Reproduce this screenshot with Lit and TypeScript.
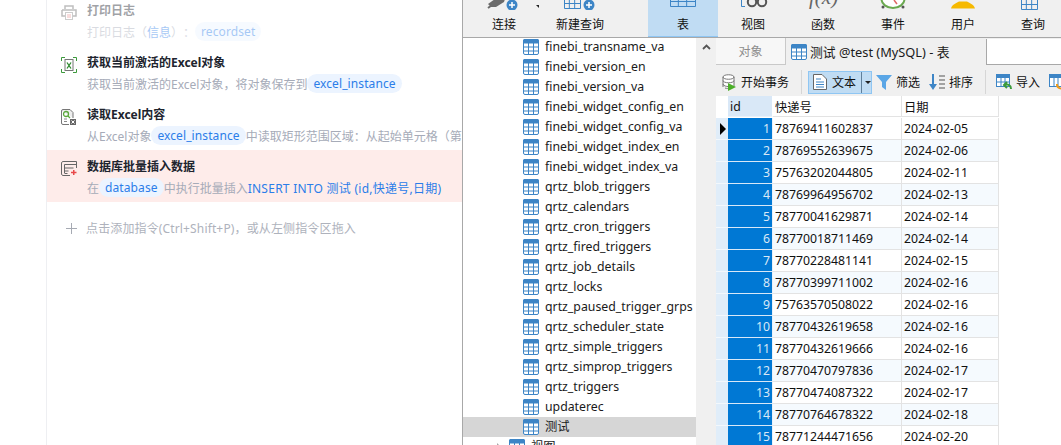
import { LitElement, html, css, svg } from "lit";
import { customElement } from "lit/decorators.js";

const tableNames = [
  "finebi_transname_va","finebi_version_en","finebi_version_va","finebi_widget_config_en","finebi_widget_config_va",
  "finebi_widget_index_en","finebi_widget_index_va","qrtz_blob_triggers","qrtz_calendars","qrtz_cron_triggers",
  "qrtz_fired_triggers","qrtz_job_details","qrtz_locks","qrtz_paused_trigger_grps","qrtz_scheduler_state",
  "qrtz_simple_triggers","qrtz_simprop_triggers","qrtz_triggers","updaterec","测试",
];
const rows: [string, string][] = [
  ["78769411602837","2024-02-05"],["78769552639675","2024-02-06"],["75763202044805","2024-02-11"],
  ["78769964956702","2024-02-13"],["78770041629871","2024-02-14"],["78770018711469","2024-02-14"],
  ["78770228481141","2024-02-15"],["78770399711002","2024-02-16"],["75763570508022","2024-02-16"],
  ["78770432619658","2024-02-16"],["78770432619666","2024-02-16"],["78770470797836","2024-02-17"],
  ["78770474087322","2024-02-17"],["78770764678322","2024-02-18"],["78771244471656","2024-02-20"],
];

const gridIcon = html`<svg class="ti" width="16" height="16" viewBox="0 0 16 16">
  <rect x=".5" y=".5" width="15" height="15" rx="1.5" fill="#fff" stroke="#3d85c6"/>
  <rect x="0" y="0" width="16" height="4.5" rx="1.5" fill="#3d85c6"/>
  <path d="M0 8h16M0 12h16M5.5 4v12M10.500 4v12" stroke="#3d85c6" stroke-width="1"/>
</svg>`;

const plus = (cx: number, cy: number) => svg`<circle cx=${cx} cy=${cy} r="5.500" fill="#3d85c6"/><path d="M${cx - 3} ${cy}h6M${cx} ${cy - 3}v6" stroke="#fff" stroke-width="1.500"/>`;
const gridBottom = (x: number, w: number, bottom: number) => {
  const c = (w - 1) / 3;
  return svg`<path d="M${x + .5} 0V${bottom - .5}H${x + w - .5}V0M${x} ${bottom - 5.500}H${x + w}M${x + c} 0V${bottom}M${x + 2 * c} 0V${bottom}" fill="none" stroke="#3d85c6"/>`;
};

const topIcons = {
  conn: svg`<path d="M19 4L26 -1H36L35 2L27 7H22Z" fill="#6b6b6b"/><path d="M19 8L23 5" stroke="#6b6b6b" stroke-width="2"/>${plus(43, 5)}<path d="M67 5h6l-3 3z" fill="#222"/>`,
  query: svg`${gridBottom(19, 17, 9)}${plus(44, 5)}`,
  table: svg`${gridBottom(22, 26, 7)}`,
  view: svg`<path d="M23.500 0V6.500H27" fill="none" stroke="#3d85c6"/><circle cx="34" cy="2" r="4.200" fill="none" stroke="#555" stroke-width="2"/><circle cx="44" cy="2" r="4.200" fill="none" stroke="#555" stroke-width="2"/>`,
  func: svg`<text x="21" y="4" class="fx">f(x)</text>`,
  event: svg`<path d="M23.500 -1A11.500 9 0 0 0 46.500 -1" fill="#fff" stroke="#6aa84f" stroke-width="2"/><path d="M36 0L39 4" stroke="#e06666" stroke-width="1.500"/><circle cx="25" cy="7" r="1.500" fill="#555"/><circle cx="45" cy="7" r="1.500" fill="#555"/>`,
  user: svg`<path d="M23 8.500C24 4 29 3 31 1.500H39C41 3 46 4 47 8.500Z" fill="#f6b900"/>`,
  find: svg`${gridBottom(23, 17, 10)}`,
};

@customElement("tb-item")
class TbItem extends LitElement {
  static properties = { label: {}, active: { type: Boolean, reflect: true } };
  label = "";
  active = false;
  static styles = css`
    :host { display: flex; flex-direction: column; align-items: center; width: 70px; height: 37px; box-sizing: border-box; }
    :host([active]) { background: #c0dcf3; border-bottom: 1px solid #8fc6f3; }
    svg { display: block; width: 70px; height: 10px; flex: none; }
    .fx { font: italic 21px "Liberation Serif", serif; fill: #666; }
    span { margin-top: 7px; font-size: 12px; line-height: 16px; color: #111; white-space: nowrap; }
  `;
  render() {
    return html`<svg viewBox="0 0 70 10">${(topIcons as any)[this.getAttribute("icon") || "table"]}</svg><span>${this.label}</span>`;
  }
}

@customElement("app-root")
export class AppRoot extends LitElement {
  static styles = css`
    :host { display: grid; grid-template-columns: 463px 1fr; width: 1061px; height: 445px; overflow: hidden; background: #fff;
      font-family: "Noto Sans", "Noto Sans CJK SC", sans-serif; text-spacing-trim: space-all; }

    .flow { border-right: 1px solid #a8a8a8; overflow: hidden; height: 445px; box-sizing: border-box; padding-left: 46px; }
    .flowin { border-left: 1px solid #eeeff2; height: 451px; margin-top: -6px; }
    .step { display: grid; grid-template-columns: 40px 1fr; height: 52px; align-items: start; padding-top: 8px; box-sizing: border-box; }
    .step.faded { opacity: .42; }
    .step.err { background: #feecea; }
    .step svg { margin: 3px 0 0 14px; display: block; }
    .txt { min-width: 0; }
    .tt { font-size: 12px; line-height: 17px; font-weight: 700; color: #20242e; white-space: nowrap; }
    .ds { display: flex; align-items: center; height: 19px; margin-top: 3px; font-size: 12px; color: #a6abb8; white-space: nowrap; overflow: hidden; }
    .chip { background: #ecf4ff; color: #2b7de9; border-radius: 10px; padding: 0 6px; line-height: 19px; letter-spacing: .1px; flex: none; }
    .blue { color: #2b7de9; }
    .wide { letter-spacing: .26px; }
    .add { display: flex; align-items: center; margin-top: 18px; height: 16px; padding-left: 19px; font-size: 12px; letter-spacing: .14px; color: #aeb2bc; white-space: nowrap; }
    .add svg { margin-right: 9px; }

    .right { display: flex; flex-direction: column; min-width: 0; height: 445px; }
    .tb { display: flex; height: 37px; flex: none; background: #f0f0f0; padding-left: 6px; box-sizing: content-box; border-bottom: 1px solid #a8a8a8; }
    .tb .q { margin-left: 6px; }
    .tb .sep { width: 1px; height: 35px; background: #dcdcdc; margin: 0 16px 0 17px; }
    .main { display: grid; grid-template-columns: 233px 20px 1fr; flex: 1; min-height: 0; }

    .tree { overflow: hidden; }
    .treein { margin-top: -1px; }
    .node { display: flex; align-items: center; height: 20px; padding-left: 60px; font-size: 12.300px; color: #1a1a1a; white-space: nowrap; }
    .node span.t { margin-bottom: 2px; }
    .node.sel { background: #d6d6d6; }
    .node.folder { padding-left: 46px; }
    .node .ti { margin-right: 6px; flex: none; }
    .arrow { width: 0; height: 0; border-left: 4px solid #a6a6a6; border-top: 4px solid transparent; border-bottom: 4px solid transparent; margin: 0 8px 0 -12px; }

    .sb { background: #f0f0f0; display: flex; justify-content: center; padding-top: 6px; align-items: flex-start; }

    .data { display: flex; flex-direction: column; min-width: 0; background: #f0f0f0; }
    .tabs { display: flex; height: 27px; flex: none; }
    .tab0 { width: 69px; background: #f7f7f7; border-right: 1px solid #c9c9c9; border-bottom: 1px solid #c9c9c9; display: flex; align-items: center; justify-content: center; font-size: 12px; color: #8d8d8d; }
    .tab1 { width: 200px; display: flex; align-items: center; padding-left: 5px; box-sizing: border-box; gap: 3px; font-size: 12.800px; color: #1a1a1a; white-space: nowrap; }
    .tabrest { flex: 1; background: #fff; border-left: 1px solid #a8a8a8; border-bottom: 1px solid #a8a8a8; margin-top: 1px; }
    .bar { display: flex; align-items: center; height: 31px; padding-top: 3px; box-sizing: border-box; flex: none; font-size: 12px; color: #111; white-space: nowrap; }
    .bi { display: flex; align-items: center; gap: 4px; flex: none; }
    .bi svg, .split svg { flex: none; }
    .bar .sep { width: 1px; height: 24px; background: #d6d6d6; flex: none; }
    .split { display: flex; align-items: center; width: 64px; height: 23px; box-sizing: border-box; background: #c0dcf3; border: 1px solid #8fc6f3; flex: none; padding-left: 4px; gap: 5px; }
    .split i { width: 1px; height: 21px; background: #5f7f9a; flex: none; }
    .caret { width: 0; height: 0; flex: none; border-left: 3px solid transparent; border-right: 3px solid transparent; border-top: 3px solid #222; margin-left: -2px; }

    .grid { flex: 1; background: #fff; display: grid; grid-template-columns: 12px 45px 129px 97px; grid-auto-rows: 22px; align-content: start; font-size: 12.250px; color: #111; overflow: hidden; }
    .hd { height: 21px; padding-top: 1px; }
    .c { display: flex; align-items: center; padding-left: 2px; box-sizing: border-box; border-right: 1px solid #e3e3e3; border-bottom: 1px solid #e3e3e3; white-space: nowrap; overflow: hidden; }
    .c.alt { background: #f5fafe; }
    .corner { border: 0; background: #fff; }
    .hid { background: #d9e8f7; border-bottom: 1px solid #e9f1f9; border-right: 1px solid #fff; }
    .ind { background: #e0edf9; border: 0; border-bottom: 1px solid #f3f8fc; padding: 0; justify-content: center; }
    .tri { width: 0; height: 0; border-left: 6px solid #000; border-top: 6px solid transparent; border-bottom: 6px solid transparent; margin-left: 2px; }
    .num { background: #0078d4; color: #d9e8f7; justify-content: flex-end; padding: 0 2px 0 0; border-right: 1px solid #e9f1f9; border-bottom: 1px solid #d9e8f7; }
  `;

  render() {
    return html`
      <section class="flow"><div class="flowin">
        <div class="step faded">
          <svg width="16" height="15" viewBox="0 0 16 15"><path d="M4 4V1h8v3M1 5h14v6h-3M4 11H1V5" fill="none" stroke="#666" stroke-width="1.500"/><rect x="4.500" y="7.500" width="7" height="7" fill="#fff" stroke="#888"/><path d="M6 10h4M6 12h4" stroke="#e06060"/></svg>
          <div class="txt"><div class="tt">打印日志</div><div class="ds">打印日志（<span class="blue">信息</span>）：<span class="chip">recordset</span></div></div>
        </div>
        <div class="step">
          <svg width="16" height="16" viewBox="0 0 16 16" fill="none"><path d="M.5 4V.5H4M12 .5h3.500V4M15.500 12v3.500H12M4 15.500H.5V12" stroke="#3c9a3c"/><rect x="4" y="2.500" width="8" height="11" fill="#fff" stroke="#777"/><path d="M6 5.500l4 6M10 5.500l-4 6" stroke="#2c8a2c" stroke-width="1.300"/></svg>
          <div class="txt"><div class="tt">获取当前激活的Excel对象</div><div class="ds">获取当前激活的Excel对象，将对象保存到<span class="chip">excel_instance</span></div></div>
        </div>
        <div class="step">
          <svg width="15" height="16" viewBox="0 0 15 16" fill="none"><path d="M.5 2A1.500 1.500 0 0 1 2 .5h7l3 3V9" fill="#eee" stroke="#777"/><path d="M.5 2v12A1.500 1.500 0 0 0 2 15.500h6" stroke="#777"/><circle cx="5" cy="5" r="2.500" stroke="#5aa83c" stroke-width="1.300"/><path d="M7 7l2 2" stroke="#5aa83c" stroke-width="1.300"/><path d="M3 10h3M3 12.500h3" stroke="#888"/><rect x="9" y="10" width="6" height="6" fill="#666"/><path d="M10.500 11.500l3 3M13.500 11.500l-3 3" stroke="#fff"/></svg>
          <div class="txt"><div class="tt">读取Excel内容</div><div class="ds">从Excel对象<span class="chip">excel_instance</span>中读取矩形范围区域：从起始单元格（第1行，第1列）到结束单元格</div></div>
        </div>
        <div class="step err">
          <svg width="16" height="15" viewBox="0 0 16 15" fill="none"><path d="M3 .5h12.500V7M3 .5A2 2 0 0 0 .5 3v9A2 2 0 0 0 3 14.500h6" stroke="#666"/><path d="M3.500 3.500h12M3.500 3.500V12M3.500 7h9M3.500 10h4M3.500 12.500h3" stroke="#666"/><path d="M10 11.500h5.500M12.750 9v5" stroke="#e8484a" stroke-width="1.500"/></svg>
          <div class="txt"><div class="tt">数据库批量插入数据</div><div class="ds">在<span class="chip">database</span>中执行批量插入<span class="blue wide">INSERT INTO 测试 (id,快递号,日期)</span></div></div>
        </div>
        <div class="add"><svg width="11" height="11" viewBox="0 0 11 11"><path d="M5.500 0v11M0 5.500h11" stroke="#a6aab3"/></svg>点击添加指令(Ctrl+Shift+P)，或从左侧指令区拖入</div>
      </div></section>

      <section class="right">
        <div class="tb">
          <tb-item icon="conn" label="连接"></tb-item>
          <tb-item class="q" icon="query" label="新建查询"></tb-item>
          <div class="sep"></div>
          <tb-item active icon="table" label="表"></tb-item>
          <tb-item icon="view" label="视图"></tb-item>
          <tb-item icon="func" label="函数"></tb-item>
          <tb-item icon="event" label="事件"></tb-item>
          <tb-item icon="user" label="用户"></tb-item>
          <tb-item icon="find" label="查询"></tb-item>
        </div>
        <div class="main">
          <div class="tree"><div class="treein">
            ${tableNames.map((n) => html`<div class="node ${n === "测试" ? "sel" : ""}">${gridIcon}<span class="t">${n}</span></div>`)}
            <div class="node folder"><span class="arrow"></span>${gridIcon}<span class="t">视图</span></div>
          </div></div>
          <div class="sb"><svg width="9" height="6" viewBox="0 0 9 6"><path d="M1 5l3.500-3.500L8 5" fill="none" stroke="#555" stroke-width="1.800"/></svg></div>
          <div class="data">
            <div class="tabs">
              <div class="tab0">对象</div>
              <div class="tab1">${gridIcon}测试 @test (MySQL) - 表</div>
              <div class="tabrest"></div>
            </div>
            <div class="bar">
              <div class="bi" style="margin-left:6px">
                <svg width="15" height="17" viewBox="0 0 15 17" fill="none"><path d="M1 3c0-3 11-3 11 0v9c0 2-6 3-9 2" stroke="#777" fill="#fff"/><path d="M1 3v10M1 3c0 3 11 3 11 0M1 6.500c0 3 11 3 11 0M1 10c0 2 4 2.500 5 2.500" stroke="#777"/><path d="M6 9l8 4-8 4z" fill="#4caf2a"/></svg>
                开始事务
              </div>
              <div class="sep" style="margin:0 6px 0 12px"></div>
              <div class="split">
                <svg width="14" height="16" viewBox="0 0 14 16" fill="none"><path d="M.5.500H9L13.500 5v10.500H.5z" fill="#fff" stroke="#666"/><path d="M3 5h5M3 8h8M3 10.500h8M3 13h8" stroke="#3d85c6"/></svg>
                文本<i></i><span class="caret"></span>
              </div>
              <div class="bi" style="margin-left:4px">
                <svg width="16" height="16" viewBox="0 0 16 16"><path d="M0 1h16l-6 7v8l-4-3V8z" fill="#5aa6e6"/></svg>
                筛选
              </div>
              <div class="bi" style="margin-left:9px">
                <svg width="16" height="16" viewBox="0 0 16 16" fill="none"><path d="M4 0v13" stroke="#3d85c6" stroke-width="2"/><path d="M0 10l4 6 4-6z" fill="#3d85c6"/><path d="M10 2h6M10 6h6M10 10h6M10 14h6" stroke="#555"/></svg>
                排序
              </div>
              <div class="sep" style="margin:0 10px 0 12px"></div>
              <div class="bi">
                <svg width="16" height="16" viewBox="0 0 16 16" fill="none"><rect x=".5" y=".5" width="13" height="12" fill="#fff" stroke="#3d85c6"/><rect x="0" y="0" width="14" height="4" fill="#3d85c6"/><path d="M5 4v9M9 4v9M0 8h14" stroke="#3d85c6"/><path d="M15 15c0-4-3-5-6-4M11 8l-3 3 3 3" stroke="#3c9a3c" stroke-width="2"/></svg>
                导入
              </div>
              <div class="bi" style="margin-left:9px">
                <svg width="16" height="16" viewBox="0 0 16 16" fill="none"><rect x=".5" y=".5" width="13" height="12" fill="#fff" stroke="#3d85c6"/><rect x="0" y="0" width="14" height="4" fill="#3d85c6"/><path d="M5 4v9M9 4v9" stroke="#3d85c6"/><path d="M8 10a4 4 0 0 0 7 3" stroke="#ef9a1a" stroke-width="2"/></svg>
              </div>
            </div>
            <div class="grid">
              <div class="c corner hd"></div><div class="c hid hd">id</div><div class="c hd">快递号</div><div class="c hd">日期</div>
              ${rows.map((r, i) => {
                const alt = i % 2 === 1 ? "alt" : "";
                return html`<div class="c ind">${i === 0 ? html`<span class="tri"></span>` : ""}</div><div class="c num">${i + 1}</div><div class="c ${alt}">${r[0]}</div><div class="c ${alt}">${r[1]}</div>`;
              })}
            </div>
          </div>
        </div>
      </section>
    `;
  }
}
void TbItem;
